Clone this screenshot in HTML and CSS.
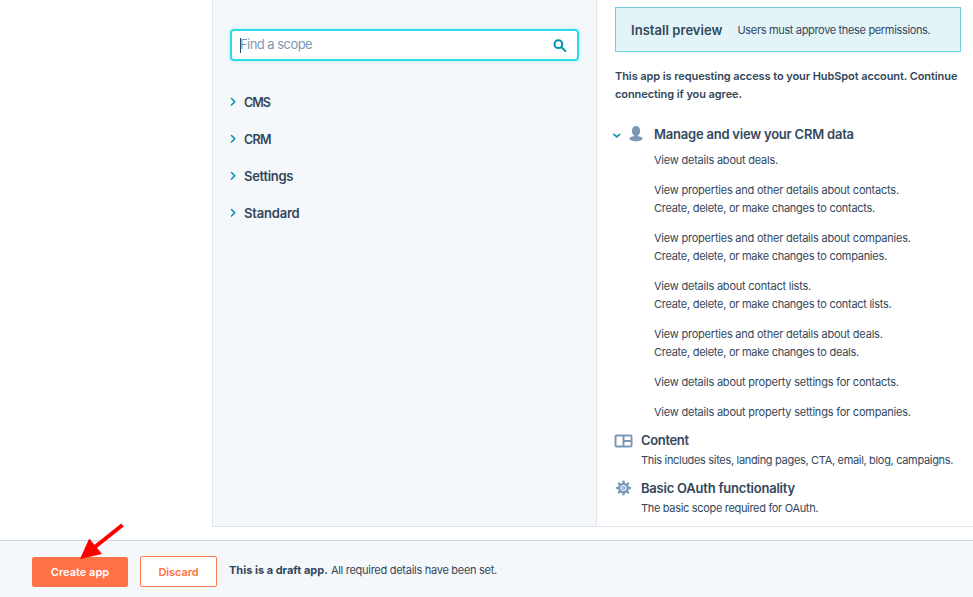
FILE: index.html
```html
<!DOCTYPE html>
<html lang="en">
<head>
<meta charset="utf-8">
<title>Create app</title>
<link rel="stylesheet" href="styles.css">
</head>
<body>
<main class="workspace">
  <section class="scopes">
    <div class="search">
      <span class="caret"></span><span class="placeholder">Find a scope</span>
      <svg class="search-icon" width="14" height="14" viewBox="0 0 14 14"><circle cx="5.4" cy="5.2" r="3.9"/><path d="M8.3 8.1 12.4 12"/></svg>
    </div>
    <ul class="scope-list">
      <li><svg class="chevron" width="6" height="10" viewBox="0 0 6 10"><path d="M1.500 1.500 4.700 4.700 1.500 8"/></svg><span class="cms">CMS</span></li>
      <li><svg class="chevron" width="6" height="10" viewBox="0 0 6 10"><path d="M1.500 1.500 4.700 4.700 1.500 8"/></svg><span class="crm">CRM</span></li>
      <li><svg class="chevron" width="6" height="10" viewBox="0 0 6 10"><path d="M1.500 1.500 4.700 4.700 1.500 8"/></svg><span class="settings">Settings</span></li>
      <li><svg class="chevron" width="6" height="10" viewBox="0 0 6 10"><path d="M1.500 1.500 4.700 4.700 1.500 8"/></svg><span class="standard">Standard</span></li>
    </ul>
  </section>
  <section class="preview">
    <div class="banner"><strong>Install preview</strong><span>Users must approve these permissions.</span></div>
    <p class="intro">This app is requesting access to your HubSpot account. Continue<br>connecting if you agree.</p>
    <div class="crm-head">
      <svg class="chevron" width="8" height="6" viewBox="0 0 8 6"><path d="M.9 1.300 3.800 3.800 6.700 1.300"/></svg>
      <svg class="person" width="14" height="16" viewBox="0 0 14 16"><ellipse cx="7" cy="5" rx="4.200" ry="4.900"/><path d="M5 8h4v2.200c2.600.3 4.500 1 4.500 2.300C13.500 14.200 10.500 15.200 7 15.200S.5 14.200.5 12.500c0-1.300 1.900-2 4.500-2.300Z"/></svg>
      <h2 class="manage">Manage and view your CRM data</h2>
    </div>
    <div class="permissions">
      <p>View details about deals.</p>
      <p>View properties and other details about contacts.<br><span class="change">Create, delete, or make changes to contacts.</span></p>
      <p>View properties and other details about companies.<br><span class="change">Create, delete, or make changes to companies.</span></p>
      <p>View details about contact lists.<br><span class="change">Create, delete, or make changes to contact lists.</span></p>
      <p>View properties and other details about deals.<br><span class="change">Create, delete, or make changes to deals.</span></p>
      <p>View details about property settings for contacts.</p>
      <p>View details about property settings for companies.</p>
    </div>
    <div class="feature">
      <svg class="layout-icon" width="19" height="14" viewBox="0 0 19 14"><rect x="1.500" y="1.500" width="16" height="11" rx="1"/><path d="M9.500 1.500V12.500M9.500 7H17.500"/></svg>
      <div><h2 class="content">Content</h2><p>This includes sites, landing pages, CTA, email, blog, campaigns.</p></div>
    </div>
    <div class="feature">
      <svg class="gear" width="19" height="16" viewBox="0 0 19 16"><g stroke-width="2.600" stroke-linecap="round"><path d="M9.500 1.700V3.500M9.500 12.500V14.300M3.200 8H5M14 8H15.800M5.050 3.550 6.300 4.800M12.700 11.200 13.950 12.450M5.050 12.450 6.300 11.200M12.700 4.800 13.950 3.550"/></g><circle cx="9.500" cy="8" r="4.200" stroke-width="2.300"/><circle cx="9.500" cy="8" r="1.300" stroke-width="1.200"/></svg>
      <div><h2>Basic OAuth functionality</h2><p>The basic scope required for OAuth.</p></div>
    </div>
  </section>
</main>
<footer class="actions">
  <button class="create">Create app</button>
  <button class="discard">Discard</button>
  <p class="status"><strong>This is a draft app.</strong> <span>All required details have been set.</span></p>
  <svg class="pointer" width="46" height="38" viewBox="0 0 46 38"><path d="M43.500 2 14 25.500" stroke="#f00" stroke-width="4"/><path d="M1 36 10.200 15.500 23 31Z" fill="#f00"/></svg>
</footer>
</body>
</html>
```
FILE: styles.css
```css
* { box-sizing: border-box; }
body { margin: 0; height: 597px; overflow: hidden; display: flex; flex-direction: column; background: #fff; color: #33475b; font: 11px/18px Inter, sans-serif; }
h2, p, ul { margin: 0; padding: 0; }
p, h2, span, strong { white-space: nowrap; }
svg { fill: none; flex: none; }
.workspace { display: flex; height: 527px; margin: 0 0 13px 212px; border: solid #dfe3eb; border-width: 0 0 1px 1px; }
.scopes { flex: none; width: 383px; background: #f5f8fa; padding: 29px 17px 0; }
.search { display: flex; align-items: center; width: 349px; height: 32px; padding: 0 10px 0 8px; background: #fff; border: 2px solid #2adce8; border-radius: 4px; box-shadow: 0 0 4px #b4edf3; color: #7c98b6; font-size: 13px; }
.caret { width: 1px; height: 15px; background: #33475b; }
.placeholder { margin: -2px 0 0 -1px; letter-spacing: -.55px; }
.search-icon { margin-left: auto; margin-top: 2px; stroke: #0091ae; stroke-width: 2; stroke-linecap: round; }
.scope-list { list-style: none; margin-top: 22px; }
.scope-list li { display: flex; align-items: center; height: 37px; gap: 8px; font-size: 13px; font-weight: 600; }
.cms, .crm { padding-top: 2px; font-size: 12.5px; letter-spacing: -.95px; }
.crm { letter-spacing: -.7px; }
.settings { letter-spacing: -.3px; }
.standard { letter-spacing: -.2px; }
.chevron { stroke: #0091ae; stroke-width: 1.6; stroke-linecap: round; stroke-linejoin: round; }
.preview { flex: 1; min-width: 0; border-left: 1px solid #dfe3eb; padding: 7px 12px 0 18px; }
.banner { display: flex; align-items: center; gap: 15px; height: 45px; padding-left: 15px; border: 1px solid #6fcfdb; background: #e2f4f8; }
.banner strong { font-size: 13px; font-weight: 600; letter-spacing: .05px; }
.banner span { padding-top: 1px; letter-spacing: -.34px; }
.intro { margin-top: 15px; font-weight: 600; letter-spacing: -.08px; }
.crm-head { display: flex; align-items: center; height: 18px; margin-top: 22px; }
.crm-head .chevron { margin: 3px 8px 0 -2px; }
.person { margin-right: 11px; fill: #7c98b6; }
h2 { font-size: 13px; line-height: 18px; font-weight: 600; letter-spacing: -.22px; }
.content { letter-spacing: -.35px; }
.permissions { display: grid; gap: 12px; margin: 8px 0 10px 39px; letter-spacing: -.22px; }
.change { letter-spacing: -.27px; }
.feature { display: flex; gap: 8px; height: 48px; margin-left: -1px; }
.feature p { margin-top: 2px; letter-spacing: -.32px; }
.feature svg { stroke: #7c98b6; stroke-width: 2; }
.layout-icon { margin-top: 3px; }
.gear { margin-top: 1px; }
.actions { position: relative; display: flex; height: 57px; padding: 15px 32px 0; border-top: 1px solid #cbd6e2; background: #f5f8fa; }
button { font: 600 11px/18px Inter, sans-serif; border-radius: 2px; padding: 0; }
.create { width: 96px; height: 30px; margin: 1px 12px 0 0; border: 0; background: #ff7247; color: #fff; }
.discard { width: 77px; height: 31px; border: 1px solid #ff7a53; background: #fff; color: #ff7247; letter-spacing: -.1px; }
.status { margin: 5px 0 0 12px; }
.status span { letter-spacing: -.28px; }
.pointer { position: absolute; left: 79px; top: -18px; }
```
